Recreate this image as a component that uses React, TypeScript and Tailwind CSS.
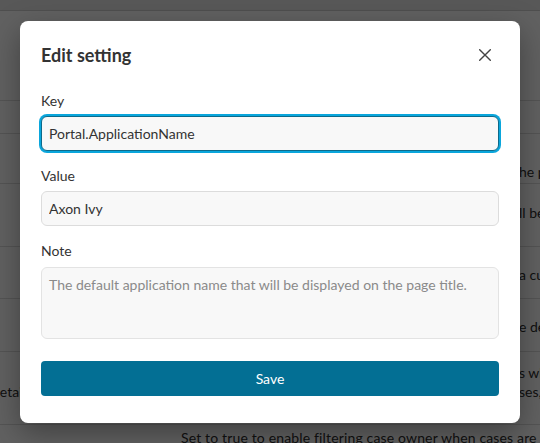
const rows = [
  { h: 'h-[50px]', pt: 'pt-[28px]', prefix: 'Name of the portal application that is shown in t', tail: 'he portal header and title' },
  { h: 'h-[63px]', pt: 'pt-[19px]', prefix: 'Maximum number of tasks shown on the dashboard wi', tail: 'll be loaded at once' },
  { h: 'h-[52px]', pt: 'pt-[18px]', prefix: 'Set to true to display the task list inside as well as', tail: ' a custom widget' },
  { h: 'h-[53px]', pt: 'pt-[18px]', prefix: 'Format of the dates displayed in the portal, uses th', tail: 'e default pattern' },
];

const BackgroundPage = () => (
  <div className="flex flex-col text-sm leading-5 text-[#2e2e2e]">
    <div className="h-[11px] border-b border-[#cfcfcf] bg-[#e6e6e6]" />
    <div className="h-[89px]" />
    <div className="h-[34px] border-y border-[#dcdcdc]" />
    {rows.map((row) => (
      <div key={row.tail} className={`flex ${row.h} border-b border-[#dcdcdc] ${row.pt}`}>
        <div className="w-[181px] shrink-0" />
        <div className="flex whitespace-nowrap">
          <span className="inline-block w-[338px] overflow-hidden">{row.prefix}</span>
          <span>{row.tail}</span>
        </div>
      </div>
    ))}
    <div className="flex h-[73px] border-b border-[#dcdcdc] pt-[11px]">
      <div className="w-[181px] shrink-0 pt-[19px]">
        <span className="-ml-[8px] whitespace-nowrap">details</span>
      </div>
      <div className="flex flex-col whitespace-nowrap leading-[19px]">
        <div className="flex">
          <span className="inline-block w-[338px] overflow-hidden">Comma separated list of columns that are displayed</span>
          <span>s when the user</span>
        </div>
        <div className="flex">
          <span className="inline-block w-[338px] overflow-hidden">opens the list of all tasks and the list of all ca</span>
          <span>ses, if configured</span>
        </div>
      </div>
    </div>
    <div className="flex pt-[3px]">
      <div className="w-[181px] shrink-0" />
      <div className="whitespace-nowrap tracking-[0.15px]">Set to true to enable filtering case owner when cases are queried</div>
    </div>
  </div>
);

const Dialog = () => (
  <div className="w-[500px] rounded-lg bg-white px-[21px] pt-[19px] pb-[27px] shadow-[0_10px_30px_rgba(0,0,0,0.35)]">
    <div className="flex h-[30px] items-center justify-between">
      <h2 className="text-[18px] font-bold text-[#333]">Edit setting</h2>
      <button className="flex h-[28px] w-[28px] items-center justify-center text-[#444]">
        <svg width="12" height="12" viewBox="0 0 12 12" fill="none" stroke="currentColor" strokeWidth="1.4" strokeLinecap="round">
          <path d="M0.7 0.7 L11.3 11.3 M11.3 0.7 L0.7 11.3" />
        </svg>
      </button>
    </div>

    <label className="mt-[21px] mb-[5px] block text-sm leading-5 text-[#333]">Key</label>
    <input
      readOnly
      value="Portal.ApplicationName"
      className="block h-[35px] w-full rounded-[6px] border border-[#0d6a8a] bg-[#f8f8f8] px-[7px] text-sm text-[#333] shadow-[0_0_0_2px_#0aa6dc] outline-none"
    />

    <label className="mt-[15px] mb-[5px] block text-sm leading-5 text-[#333]">Value</label>
    <input
      readOnly
      value="Axon Ivy"
      className="block h-[35px] w-full rounded-[6px] border border-[#dcdcdc] bg-[#f8f8f8] px-[7px] text-sm text-[#333] outline-none"
    />

    <label className="mt-[15px] mb-[6px] block text-sm leading-5 text-[#333]">Note</label>
    <textarea
      readOnly
      placeholder="The default application name that will be displayed on the page title."
      className="block h-[72px] w-full resize-none rounded-[6px] border border-[#e3e3e3] bg-[#f8f8f8] px-[7px] py-[7px] text-sm leading-5 text-[#333] outline-none placeholder:text-[#8a8a8a]"
    />

    <button className="mt-[22px] flex h-[35px] w-full items-center justify-center rounded-[4px] bg-[#036f94] text-sm text-white">
      Save
    </button>
  </div>
);

export default function App() {
  return (
    <div className="relative h-[443px] w-[540px] overflow-hidden bg-white font-['Lato','Noto_Sans',sans-serif]">
      <BackgroundPage />
      <div className="absolute inset-0 flex items-start justify-center bg-black/[0.62] pt-[21px]">
        <Dialog />
      </div>
    </div>
  );
}
